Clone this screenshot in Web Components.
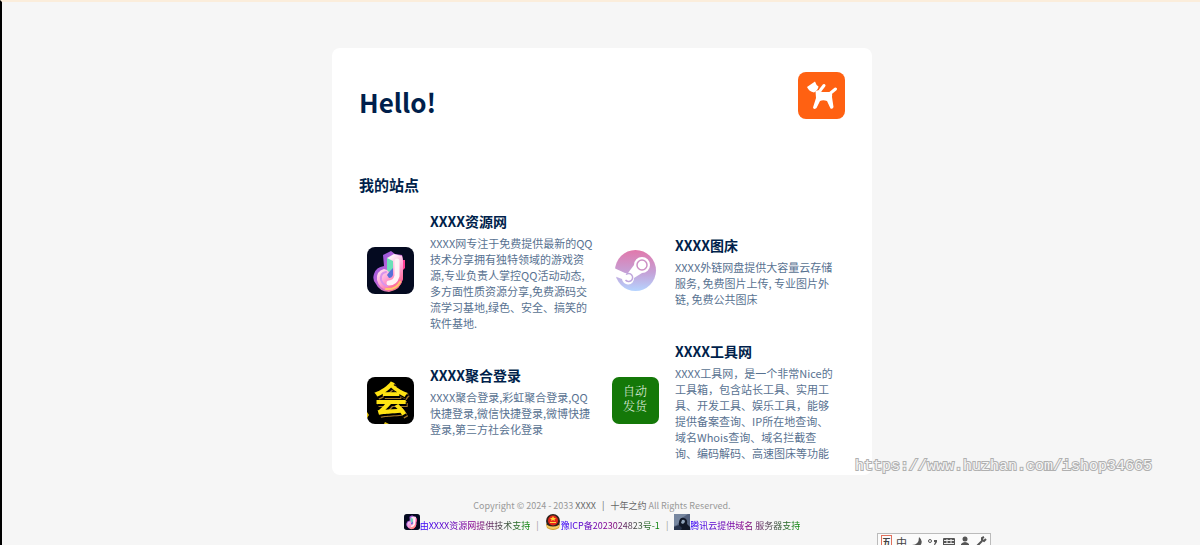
<!DOCTYPE html>
<html lang="zh-CN">
<head>
<meta charset="utf-8">
<meta name="viewport" content="width=device-width, initial-scale=1">
<title>Hello!</title>
<style>
  html {
    height: 100%;
  }

  body {
    margin: 0;
    min-height: 100%;
    background: #f6f6f6;
    color: #001f4b;
    font-family: "Noto Sans CJK SC", "Noto Sans", sans-serif;
    overflow: hidden;
  }
</style>
</head>
<body>
<nav-page>
  <nav-card greeting="Hello!" heading="我的站点">
    <app-icon slot="logo" name="dog"></app-icon>
    <site-item name="XXXX资源网">
      <app-icon slot="icon" name="disco"></app-icon>
      XXXX网专注于免费提供最新的QQ技术分享拥有独特领域的游戏资源,专业负责人掌控QQ活动动态,多方面性质资源分享,免费源码交流学习基地,绿色、安全、搞笑的软件基地.
    </site-item>
    <site-item name="XXXX图床">
      <app-icon slot="icon" name="steam"></app-icon>
      XXXX外链网盘提供大容量云存储服务, 免费图片上传, 专业图片外链, 免费公共图床
    </site-item>
    <site-item name="XXXX聚合登录">
      <app-icon slot="icon" name="member"></app-icon>
      XXXX聚合登录,彩虹聚合登录,QQ快捷登录,微信快捷登录,微博快捷登录,第三方社会化登录
    </site-item>
    <site-item name="XXXX工具网">
      <app-icon slot="icon" name="auto"></app-icon>
      XXXX工具网，是一个非常Nice的工具箱，包含站长工具、实用工具、开发工具、娱乐工具，能够提供备案查询、IP所在地查询、域名Whois查询、域名拦截查询、编码解码、高速图床等功能
    </site-item>
  </nav-card>
  <page-footer></page-footer>
</nav-page>
<url-mark>https://www.huzhan.com/ishop34665</url-mark>
<ime-bar></ime-bar>

<script>
const icons = {
  dog: `
    <svg viewBox="0 0 47 47">
      <rect width="47" height="47" rx="8" fill="#ff6112"/>
      <path fill="#fff" d="M9 15L17 9.500Q18 13 20.500 14.500Q20 18 16 20.500Q11 19.500 9 15Z"/>
      <path fill="none" stroke="#fff" stroke-width="3" stroke-linecap="round" d="M22.500 18L26 13.500M32 21.500L37.500 17"/>
      <path fill="#fff" d="M17.500 19L21 18L24 20H31Q35 20 34 25L35.500 35Q35 37.500 32.500 36.500L29 29Q25 27.500 22 29L18.500 36Q15.500 38 15 35.500L18 26Z"/>
    </svg>`,
  disco: `
    <svg viewBox="0 0 47 47">
      <defs>
        <linearGradient id="back" x1="0" y1="0" x2="1" y2="1">
          <stop offset="0" stop-color="#7d4dde"/>
          <stop offset=".5" stop-color="#c267d8"/>
          <stop offset="1" stop-color="#ff9667"/>
        </linearGradient>
        <linearGradient id="front" x1="0" y1="0" x2=".6" y2="1">
          <stop offset="0" stop-color="#a9f0df"/>
          <stop offset=".3" stop-color="#fff1f8"/>
          <stop offset=".65" stop-color="#ffa3d6"/>
          <stop offset="1" stop-color="#ff5f8e"/>
        </linearGradient>
      </defs>
      <rect width="47" height="47" rx="8" fill="#040a20"/>
      <path fill="url(#back)" d="M16 8L24 4L28 7L35 8L36 12V31Q34 43 22 45Q12 44 9 37Q5 33 7 27Q9 20 17 19Z"/>
      <path fill="#ff3f96" d="M32 13H38V21L35 24Z"/>
      <path fill="url(#front)" d="M20 11L27 7L35 9L36 14V32Q33 43 22 44Q12 42 10 33Q9 24 17 22L20 23Z"/>
      <path fill="#6ce0b8" d="M20 11L26 14V22L22 25L20 23Z"/>
      <path fill="#5670d8" d="M23 24L26 21V28Q25 31 22 31L20 28Z"/>
      <path fill="none" stroke="#fff3f7" stroke-width="5" stroke-linecap="round" d="M30 14V29Q28 36 22 36"/>
      <path fill="none" stroke="#d893ec" stroke-width="2" stroke-linecap="round" d="M19 25Q13 26 14 33Q16 38 20 39"/>
      <path fill="none" stroke="#ffc66e" stroke-width="2" stroke-linecap="round" d="M19 42Q29 43 33 35"/>
    </svg>`,
  steam: `
    <svg viewBox="0 0 47 47">
      <defs>
        <linearGradient id="sky" x1="0" y1="0" x2="0" y2="1">
          <stop offset="0" stop-color="#e178ab"/>
          <stop offset=".55" stop-color="#c5a1d7"/>
          <stop offset="1" stop-color="#b5d4ff"/>
        </linearGradient>
      </defs>
      <circle cx="23.500" cy="23.500" r="20.500" fill="url(#sky)"/>
      <path fill="#fff" d="M2 21L13 26H16L22 18A8 8 0 1 1 30 26L22 31A6 6 0 0 1 10 32L2 29Z"/>
      <circle cx="30" cy="18" r="5" fill="none" stroke="#cd8fc5" stroke-width="1.500"/>
      <path fill="none" stroke="#bfa6dc" stroke-width="1.500" d="M14 27.500A4 4 0 1 1 13.500 33"/>
    </svg>`,
  member: `
    <svg viewBox="0 0 47 47">
      <rect width="47" height="47" rx="8" fill="#000"/>
      <text x="24" y="35" fill="#ffe313" font-family="Noto Sans CJK SC" font-weight="700" font-size="35" text-anchor="middle" style="filter: drop-shadow(1px 2px 0 #000) drop-shadow(1px 1px 0 #a0742a)">会</text>
      <path fill="#e8c610" d="M0 35L2 38L0 41ZM17 47L18 45L22 47Z"/>
    </svg>`,
  auto: `
    <svg viewBox="0 0 47 47">
      <rect width="47" height="47" rx="7" fill="#147808"/>
      <g font-family="Noto Serif CJK SC, Noto Sans CJK SC" font-weight="300" font-size="12" text-anchor="middle" fill="#e5f3e2">
        <text x="23" y="19">自动</text>
        <text x="23" y="34">发货</text>
      </g>
    </svg>`,
  police: `
    <svg viewBox="0 0 16 16">
      <path fill="#d39a25" d="M1 10H15L14 14Q8 18 2 14Z"/>
      <circle cx="8" cy="7" r="7" fill="#30241d"/>
      <circle cx="8" cy="6.500" r="5" fill="#e62719"/>
      <path fill="#ffd43b" d="M8 2L9 4H11L9.500 5.500L10 7L8 6L6 7L6.500 5.500L5 4H7ZM5 8H11V9H5Z"/>
      <path fill="#f5ca61" d="M2 11Q8 14 14 11V13Q8 17 2 13Z"/>
    </svg>`,
  photo: `
    <svg viewBox="0 0 16 16">
      <rect width="16" height="16" fill="#53617d"/>
      <path fill="#7787a0" d="M0 0H14L8 4L3 11L0 12Z"/>
      <path fill="#111827" d="M5 16V8Q6 3 10 4Q14 5 13 10L16 13V16Z"/>
      <path fill="#90a3b9" d="M8 6Q11 5 11 8L9 10L7 9Z"/>
      <path fill="#28344d" d="M0 13L5 11L8 14L7 16H0Z"/>
    </svg>`
};

class AppIcon extends HTMLElement {
  constructor() {
    super();
    this.attachShadow({ mode: 'open' });
  }

  connectedCallback() {
    this.shadowRoot.innerHTML = `
    <style>
      :host {
        display: block;
        flex: none;
        width: var(--icon-size, 47px);
        height: var(--icon-size, 47px);
      }

      svg {
        display: block;
        width: 100%;
        height: 100%;
        overflow: visible;
      }
    </style>
    ${icons[this.getAttribute('name')]}
    `;
  }
}

customElements.define('app-icon', AppIcon);

class NavPage extends HTMLElement {
  constructor() {
    super();
    this.attachShadow({ mode: 'open' });
    this.shadowRoot.innerHTML = `
    <style>
      :host {
        display: flex;
        flex-direction: column;
        align-items: center;
        box-sizing: border-box;
        min-height: 100vh;
        padding: 46px 0 0 2px;
        border-top: 2px solid #fbeddb;
        border-left: 2px solid #000;
      }
    </style>
    <slot></slot>
    `;
  }
}

customElements.define('nav-page', NavPage);

class NavCard extends HTMLElement {
  constructor() {
    super();
    this.attachShadow({ mode: 'open' });
  }

  connectedCallback() {
    this.shadowRoot.innerHTML = `
    <style>
      :host {
        display: block;
        box-sizing: border-box;
        width: 100%;
        max-width: 540px;
        padding: 24px 27px 14px;
        border-radius: 8px;
        background: #fff;
      }

      header {
        display: flex;
        justify-content: space-between;
        align-items: flex-end;
      }

      h1 {
        margin: 0;
        font-size: 26px;
        line-height: 34px;
        font-weight: 600;
      }

      h2 {
        margin: 54px 0 12px;
        font-size: 15px;
        line-height: 24px;
        font-weight: 600;
      }

      .sites {
        display: grid;
        grid-template-columns: 1fr 1fr;
        gap: 8px 4px;
      }

      @media all and (max-width: 520px) {
        .sites {
          grid-template-columns: 1fr;
        }
      }
    </style>
    <header>
      <h1>${this.getAttribute('greeting')}</h1>
      <slot name="logo"></slot>
    </header>
    <h2>${this.getAttribute('heading')}</h2>
    <div class="sites">
      <slot></slot>
    </div>
    `;
  }
}

customElements.define('nav-card', NavCard);

class SiteItem extends HTMLElement {
  constructor() {
    super();
    this.attachShadow({ mode: 'open' });
  }

  connectedCallback() {
    this.shadowRoot.innerHTML = `
    <style>
      :host {
        display: block;
      }

      a {
        display: flex;
        align-items: center;
        gap: 16px;
        box-sizing: border-box;
        height: 100%;
        padding: 0 7px 0 8px;
        color: inherit;
        text-decoration: none;
      }

      .text {
        flex: 1;
        min-width: 0;
      }

      h3 {
        margin: 0 0 2px;
        font-size: 14px;
        line-height: 24px;
        font-weight: 600;
      }

      p {
        margin: 0;
        color: #587291;
        font-size: 11px;
        line-height: 16px;
      }
    </style>
    <a href="#">
      <slot name="icon"></slot>
      <div class="text">
        <h3>${this.getAttribute('name')}</h3>
        <p><slot></slot></p>
      </div>
    </a>
    `;
  }
}

customElements.define('site-item', SiteItem);

class PageFooter extends HTMLElement {
  constructor() {
    super();
    this.attachShadow({ mode: 'open' });
    this.shadowRoot.innerHTML = `
    <style>
      :host {
        display: flex;
        flex-direction: column;
        align-items: center;
        margin-top: 23px;
        color: #999;
        font-size: 9px;
        line-height: 16px;
        --icon-size: 16px;
      }

      p {
        margin: 0;
      }

      p a {
        color: #666;
        text-decoration: none;
      }

      p i {
        margin: 0 4px;
        color: #666;
        font-style: normal;
      }

      .links {
        display: flex;
        flex-wrap: wrap;
        justify-content: center;
        gap: 6px;
      }

      .links a {
        display: flex;
        text-decoration: none;
      }

      .links span {
        padding-top: 4px;
        background: linear-gradient(to right, #30f, #808, #080);
        -webkit-background-clip: text;
        background-clip: text;
        color: transparent;
      }

      .links i {
        padding-top: 4px;
        font-style: normal;
      }
    </style>
    <p>Copyright © 2024 - 2033 <a href="#">XXXX</a> <i>|</i> <a href="#">十年之约</a> All Rights Reserved.</p>
    <div class="links">
      <a href="#"><app-icon name="disco"></app-icon><span>由XXXX资源网提供技术支持</span></a>
      <i>|</i>
      <a href="#"><app-icon name="police"></app-icon><span>豫ICP备2023024823号-1</span></a>
      <i>|</i>
      <a href="#"><app-icon name="photo"></app-icon><span>腾讯云提供域名 服务器支持</span></a>
    </div>
    `;
  }
}

customElements.define('page-footer', PageFooter);

class UrlMark extends HTMLElement {
  constructor() {
    super();
    this.attachShadow({ mode: 'open' });
    this.shadowRoot.innerHTML = `
    <style>
      :host {
        position: absolute;
        right: 48px;
        bottom: 68px;
        color: #f6f6f6;
        font: 15px/20px "Liberation Mono", monospace;
        -webkit-text-stroke: 2px #b0b0b0;
        paint-order: stroke fill;
      }
    </style>
    <slot></slot>
    `;
  }
}

customElements.define('url-mark', UrlMark);

// input method bar, partly below the bottom edge of the window
class ImeBar extends HTMLElement {
  constructor() {
    super();
    this.attachShadow({ mode: 'open' });
    this.shadowRoot.innerHTML = `
    <style>
      :host {
        position: absolute;
        right: 209px;
        bottom: -6px;
        display: flex;
        align-items: center;
        gap: 4px;
        box-sizing: border-box;
        height: 18px;
        padding: 0 3px;
        border: 1px solid #bbb;
        background: #fbfbfb;
        color: #444;
        font-size: 11px;
        line-height: 16px;
      }

      svg {
        width: 12px;
        height: 12px;
      }

      b {
        border: 1px solid #e0705c;
        font-size: 9px;
        line-height: 12px;
      }
    </style>
    <b>五</b>
    <span>中</span>
    <svg viewBox="0 0 12 12"><path fill="#555" d="M8 1Q13 5 9 10Q5 13 1 9Q8 9 8 1Z"/></svg>
    <svg viewBox="0 0 12 12"><circle cx="3" cy="5" r="1.500" fill="none" stroke="#555"/><path fill="#555" d="M7 4H10V6L8 9H7L8 6H7Z"/></svg>
    <svg viewBox="0 0 12 12"><rect y="2" width="12" height="9" rx="1" fill="#555"/><path stroke="#eee" d="M1 4.500H11M1 7.500H11M4 3V8M8 3V8"/></svg>
    <svg viewBox="0 0 12 12"><circle cx="6" cy="3" r="2.500" fill="#555"/><path fill="#555" d="M2 12V8Q6 4 10 8V12Z"/></svg>
    <svg viewBox="0 0 12 12"><path fill="none" stroke="#555" stroke-width="2" d="M1 11L7 5M11 3L9 5L7 4L7 2L9 1"/></svg>
    `;
  }
}

customElements.define('ime-bar', ImeBar);
</script>
</body>
</html>
